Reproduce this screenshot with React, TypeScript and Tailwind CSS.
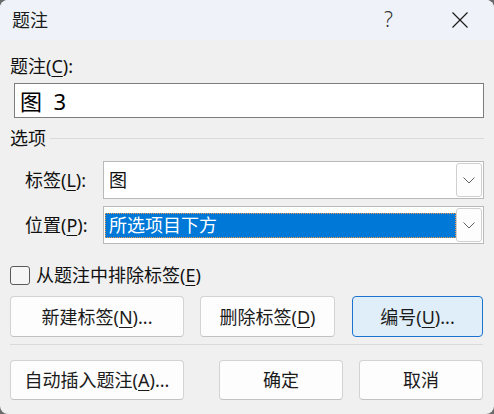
import React from "react";

const U = ({ c }: { c: string }) => (
  <span className="underline underline-offset-[3px] decoration-[1px]">{c}</span>
);

const Chevron = () => (
  <svg width="12" height="7" viewBox="0 0 12 7" fill="none">
    <path d="M0.5 0.5 L6 6 L11.5 0.5" stroke="#606060" strokeWidth="1" />
  </svg>
);

const Btn = ({
  children,
  w,
  className = "",
  primary = false,
  h = "h-[41px]",
}: {
  children: React.ReactNode;
  w: string;
  className?: string;
  primary?: boolean;
  h?: string;
}) => (
  <div
    className={`${w} ${h} ${className} flex items-center justify-center rounded-[4px] border ${
      primary
        ? "bg-[#e0eef9] border-[#1a74cf]"
        : "bg-[#fdfdfd] border-[#d3d3d3] border-b-[#c2c2c2]"
    } text-[18px] text-[#1b1b1b] leading-none`}
  >
    {children}
  </div>
);

export default function App() {
  return (
    <div className="w-[494px] h-[414px] bg-[#6a6a6a] font-['Noto_Sans','Noto_Sans_CJK_SC',sans-serif]">
      <div className="w-full h-full rounded-[8px] overflow-hidden bg-[#f0f0f0] flex flex-col">
        {/* Title bar */}
        <div className="h-[40px] bg-[#eff3f9] flex items-center pl-[12px] shrink-0">
          <span className="text-[18px] text-[#1b1b1b] leading-none">题注</span>
          <span className="ml-auto text-[21px] font-light text-[#333] leading-none mr-[59px] mt-[-1px]">?</span>
          <svg className="mr-[26px]" width="16" height="16" viewBox="0 0 16 16">
            <path d="M0.5 0.5 L15.5 15.5 M15.5 0.5 L0.5 15.5" stroke="#1b1b1b" strokeWidth="1.2" />
          </svg>
        </div>

        {/* Body */}
        <div className="flex flex-col text-[18px] text-[#111] leading-[24px]">
          <div className="mt-[14px] pl-[10px] h-[24px]">
            题注(<U c="C" />):
          </div>
          <div className="mt-[5px] ml-[14px] w-[470px] h-[35px] bg-white border border-[#7d7d7d] flex items-center pl-[5px]">
            <span className="text-[22px] leading-none whitespace-pre text-black">图  3</span>
          </div>

          <div className="mt-[8px] pl-[10px] h-[24px] flex items-center">
            <span>选项</span>
            <div className="flex-1 h-px bg-[#dadada] ml-[4px] mr-[10px]" />
          </div>

          <div className="mt-[11px] flex items-center">
            <span className="pl-[25px] w-[103px]">
              标签(<U c="L" />):
            </span>
            <div className="w-[381px] h-[38px] bg-white border border-[#b9b9b9] flex items-center pl-[5px] pr-[1px]">
              <span className="flex-1">图</span>
              <div className="w-[26px] h-[34px] bg-[#fdfdfd] border border-[#d0d0d0] rounded-[3px] flex items-center justify-center">
                <Chevron />
              </div>
            </div>
          </div>

          <div className="mt-[7px] flex items-center">
            <span className="pl-[25px] w-[103px]">
              位置(<U c="P" />):
            </span>
            <div className="w-[381px] h-[38px] bg-white border border-[#b9b9b9] flex items-center pl-[1px] pr-[1px]">
              <div className="flex-1 h-[25px] bg-[#0078d7] border border-dotted border-[#f29a4a] flex items-center pl-[3px] text-white">
                所选项目下方
              </div>
              <div className="w-[26px] h-[34px] bg-[#fdfdfd] border border-[#d0d0d0] rounded-[3px] flex items-center justify-center">
                <Chevron />
              </div>
            </div>
          </div>

          <div className="mt-[19px] h-[24px] pl-[10px] flex items-center">
            <div className="w-[20px] h-[19px] rounded-[3px] border border-[#5a5a5a] bg-[#f6f6f6]" />
            <span className="ml-[6px]">
              从题注中排除标签(<U c="E" />)
            </span>
          </div>

          <div className="mt-[9px] flex pl-[10px]">
            <Btn w="w-[174px]">
              新建标签(<U c="N" />)...
            </Btn>
            <Btn w="w-[135px]" className="ml-[16px]">
              删除标签(<U c="D" />)
            </Btn>
            <Btn w="w-[131px]" className="ml-[17px]" primary>
              编号(<U c="U" />)...
            </Btn>
          </div>

          <div className="mt-[7px] ml-[10px] w-[473px] h-px bg-[#dadada]" />

          <div className="mt-[15px] flex pl-[10px]">
            <Btn w="w-[174px]" h="h-[40px]">
              自动插入题注(<U c="A" />)...
            </Btn>
            <Btn w="w-[124px]" h="h-[40px]" className="ml-[35px]">
              确定
            </Btn>
            <Btn w="w-[124px]" h="h-[40px]" className="ml-[16px]">
              取消
            </Btn>
          </div>
        </div>
      </div>
    </div>
  );
}
